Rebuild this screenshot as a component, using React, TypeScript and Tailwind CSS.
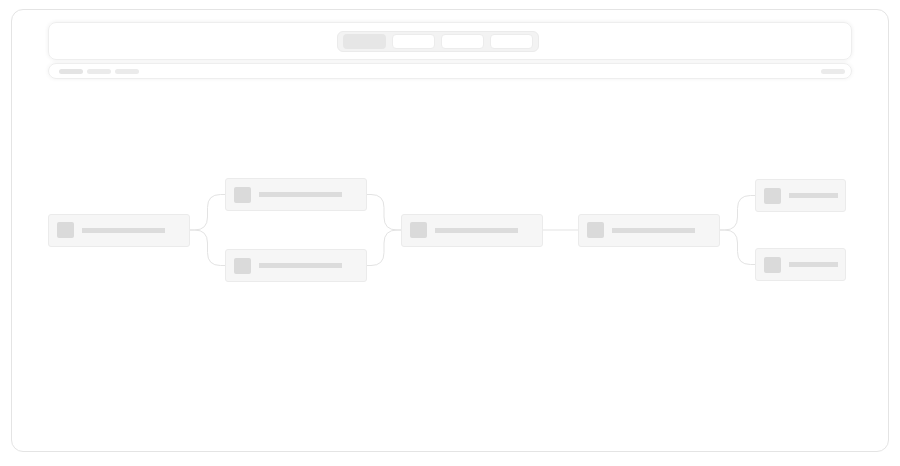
import React from 'react';

type NodeSize = 'wide' | 'narrow';

const BAR_WIDTH: Record<NodeSize, string> = {
  wide: 'w-[142px]',
  narrow: 'w-[91px]',
};

function SkeletonNode({ size = 'wide' }: { size?: NodeSize }) {
  return (
    <div
      className={`${BAR_WIDTH[size]} h-[33px] flex items-center gap-[8px] pl-[8px] rounded-[3px] border border-[#ebebeb] bg-[#f6f6f6]`}
    >
      <div className="w-[17px] h-[16px] rounded-[2px] bg-[#dadada]" />
      <div className={size === 'wide' ? 'w-[83px] h-[5px] bg-[#dcdcdc]' : 'w-[49px] h-[5px] bg-[#dcdcdc]'} />
    </div>
  );
}

// rounded step edge between two ports (canvas coords)
function step(x1: number, y1: number, x2: number, y2: number) {
  const mx = (x1 + x2) / 2;
  const r = 13;
  const dir = y2 > y1 ? 1 : -1;
  return `M${x1} ${y1} L${mx - r} ${y1} Q${mx} ${y1} ${mx} ${y1 + dir * r} L${mx} ${y2 - dir * r} Q${mx} ${y2} ${mx + r} ${y2} L${x2} ${y2}`;
}

// canvas is 805 x 302, origin at page (48, 79)
const EDGES = [
  step(142, 151, 177, 115.5),
  step(142, 151, 177, 186.5),
  step(319, 115.5, 353, 151),
  step(319, 186.5, 353, 151),
  'M495 151 L530 151',
  step(672, 151, 707, 116.5),
  step(672, 151, 707, 185.5),
];

export default function App() {
  return (
    <div className="w-[900px] h-[466px] bg-white pt-[9px] pl-[11px]" style={{ fontFamily: 'Inter, "Liberation Sans", sans-serif' }}>
      <div className="w-[878px] h-[443px] rounded-[12px] border border-[#e4e4e4] bg-white pt-[12px] px-[36px]">
        {/* top bar with tab switcher */}
        <div className="h-[38px] flex items-center pl-[288px] rounded-[8px] border border-[#eeeeee] shadow-[0_0_4px_rgba(0,0,0,0.07)]">
          <div className="flex gap-[6px] px-[5px] py-[2px] rounded-[6px] border border-[#ebebeb] bg-[#f3f3f3]">
            <div className="w-[43px] h-[15px] rounded-[4px] bg-[#e6e6e6]" />
            <div className="w-[43px] h-[15px] rounded-[4px] bg-white border border-[#ececec]" />
            <div className="w-[43px] h-[15px] rounded-[4px] bg-white border border-[#ececec]" />
            <div className="w-[43px] h-[15px] rounded-[4px] bg-white border border-[#ececec]" />
          </div>
        </div>

        {/* breadcrumb bar */}
        <div className="mt-[3px] h-[16px] flex items-center justify-between pl-[10px] pr-[6px] rounded-[8px] border border-[#eeeeee] shadow-[0_0_4px_rgba(0,0,0,0.06)]">
          <div className="flex gap-[4px]">
            <div className="w-[24px] h-[5px] rounded-full bg-[#e4e4e4]" />
            <div className="w-[24px] h-[5px] rounded-full bg-[#ebebeb]" />
            <div className="w-[24px] h-[5px] rounded-full bg-[#ebebeb]" />
          </div>
          <div className="w-[24px] h-[5px] rounded-full bg-[#ebebeb]" />
        </div>

        {/* diagram canvas */}
        <div className="relative h-[302px] w-[805px] flex items-center gap-[35px]">
          <svg className="absolute inset-0" width="805" height="302" viewBox="0 0 805 302" fill="none">
            {EDGES.map((d) => (
              <path key={d} d={d} stroke="#e3e3e3" strokeWidth="1" />
            ))}
          </svg>

          <div className="relative">
            <SkeletonNode />
          </div>
          <div className="relative flex flex-col gap-[38px]">
            <SkeletonNode />
            <SkeletonNode />
          </div>
          <div className="relative -ml-[1px]">
            <SkeletonNode />
          </div>
          <div className="relative">
            <SkeletonNode />
          </div>
          <div className="relative flex flex-col gap-[36px]">
            <SkeletonNode size="narrow" />
            <SkeletonNode size="narrow" />
          </div>
        </div>
      </div>
    </div>
  );
}
